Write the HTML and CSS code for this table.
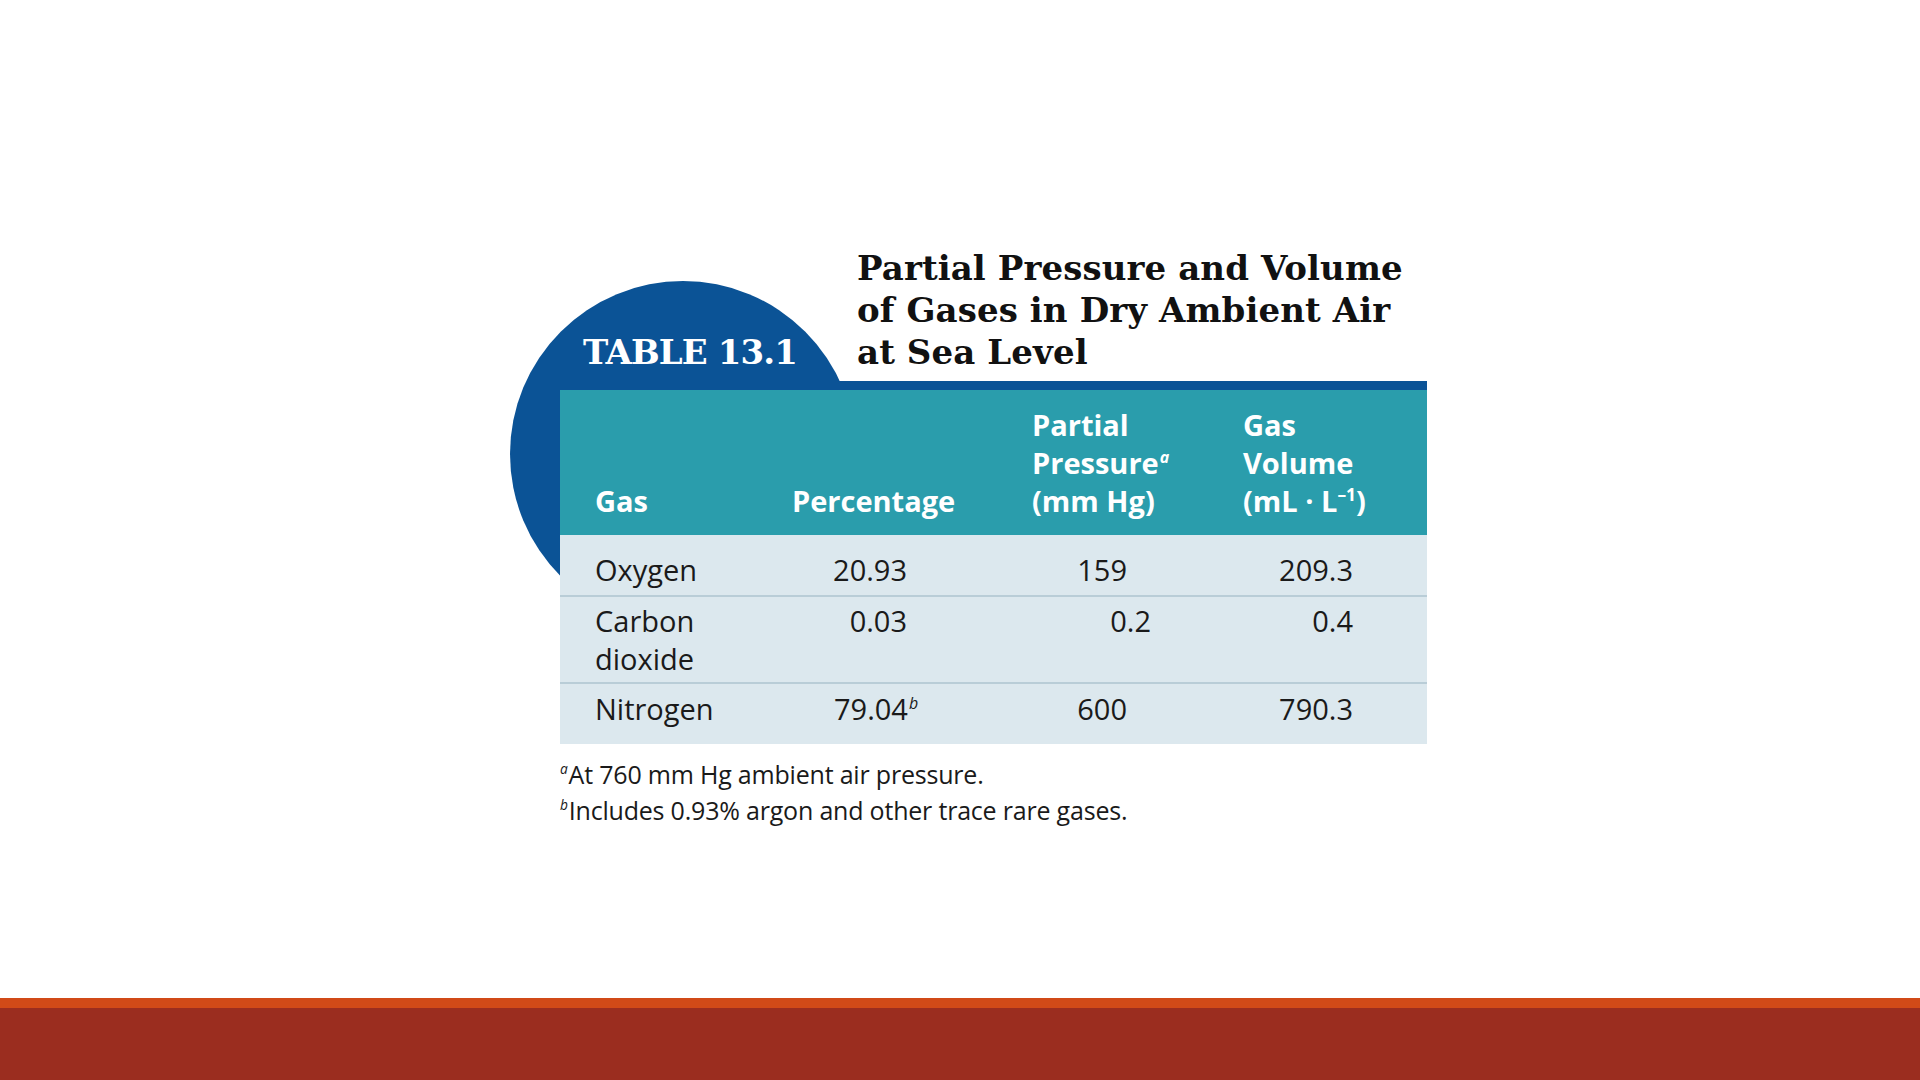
FILE: index.html
```html
<!DOCTYPE html>
<html lang="en">
<head>
<meta charset="utf-8">
<title>Table 13.1</title>
<link rel="stylesheet" href="styles.css">
</head>
<body>
<div class="slide">
  <main class="stage">
    <figure class="figure">
      <div class="disc" aria-hidden="true"></div>
      <div class="heading">
        <div class="label">TABLE 13.1</div>
        <h1 class="title">Partial Pressure and Volume<br>of Gases in Dry Ambient Air<br>at Sea Level</h1>
      </div>
      <table class="data">
        <colgroup>
          <col class="c1"><col class="c2"><col class="c3"><col class="c4">
        </colgroup>
        <thead>
          <tr>
            <th class="first">Gas</th>
            <th>Percentage</th>
            <th>Partial<br>Pressure<sup class="sup">a</sup><br>(mm Hg)</th>
            <th>Gas<br>Volume<br>(mL · L<sup class="exp">–1</sup>)</th>
          </tr>
        </thead>
        <tbody>
          <tr>
            <td class="first">Oxygen</td>
            <td class="n2">20.93</td>
            <td class="n3 int">159</td>
            <td class="n4">209.3</td>
          </tr>
          <tr>
            <td class="first">Carbon<br>dioxide</td>
            <td class="n2">0.03</td>
            <td class="n3">0.2</td>
            <td class="n4">0.4</td>
          </tr>
          <tr>
            <td class="first">Nitrogen</td>
            <td class="n2">79.04<sup class="sup hang">b</sup></td>
            <td class="n3 int">600</td>
            <td class="n4">790.3</td>
          </tr>
        </tbody>
      </table>
      <div class="notes">
        <p><sup class="sup">a</sup>At 760 mm Hg ambient air pressure.</p>
        <p><sup class="sup">b</sup>Includes 0.93% argon and other trace rare gases.</p>
      </div>
    </figure>
  </main>
  <footer class="bars">
    <div class="bar-top"></div>
    <div class="bar-main"></div>
  </footer>
</div>
</body>
</html>
```

FILE: styles.css
```css
html, body {
  margin: 0;
  padding: 0;
  background: #ffffff;
}

.slide {
  width: 1920px;
  height: 1080px;
  display: flex;
  flex-direction: column;
  overflow: hidden;
}

.stage {
  flex: 1;
  padding: 247px 0 0 560px;
  box-sizing: border-box;
}

.figure {
  margin: 0;
  width: 867px;
  position: relative;
}

.disc {
  position: absolute;
  left: -50px;
  top: 34px;
  width: 346px;
  height: 346px;
  border-radius: 50%;
  background: #0b5396;
  z-index: 0;
}

.heading {
  position: relative;
  z-index: 1;
  display: flex;
  align-items: flex-end;
  font-family: "DejaVu Serif", "Liberation Serif", serif;
  font-weight: bold;
  font-size: 34px;
  line-height: 42px;
}

.label {
  width: 297px;
  padding-left: 23px;
  box-sizing: border-box;
  color: #ffffff;
  letter-spacing: -0.9px;
}

.title {
  margin: 0;
  font-size: inherit;
  font-weight: inherit;
  line-height: inherit;
  color: #111111;
  letter-spacing: 0.1px;
}

.data {
  position: relative;
  z-index: 1;
  margin-top: 8px;
  width: 867px;
  border-collapse: collapse;
  table-layout: fixed;
  border-top: 9px solid #0b5396;
  font-family: "Open Sans", "Liberation Sans", sans-serif;
  font-size: 29px;
  line-height: 38px;
}

.c1 { width: 232px; }
.c2 { width: 240px; }
.c3 { width: 211px; }
.c4 { width: 184px; }

.data thead tr {
  background: #2a9dac;
}

.data th {
  color: #ffffff;
  font-weight: bold;
  text-align: left;
  vertical-align: bottom;
  padding: 16px 0 15px 0;
}

.data th.first,
.data td.first {
  padding-left: 35px;
}

.data tbody tr {
  background: #dce8ee;
  border-top: 2px solid #b9cdd7;
}

.data thead + tbody tr:first-child {
  border-top: none;
}

.data td {
  color: #1a1a1a;
  vertical-align: top;
  padding: 5px 0 4px 0;
  text-align: left;
}

.data tbody tr:first-child td {
  padding-top: 16px;
  padding-bottom: 6px;
}

.data tbody tr:last-child td {
  padding-top: 6px;
  padding-bottom: 16px;
}

.data td.n2 { text-align: right; padding-right: 125px; }
.data td.n3 { text-align: right; padding-right: 92px; }
.data td.n3.int { padding-right: 116px; }
.data td.n4 { text-align: right; padding-right: 74px; }

.sup {
  font-style: italic;
  font-size: 0.55em;
  vertical-align: 0.7em;
  line-height: 0;
  padding-left: 1px;
}

.hang {
  margin-right: -0.7em;
}

.exp {
  font-size: 0.6em;
  vertical-align: 0.65em;
  line-height: 0;
}

.notes {
  margin-top: 12px;
  font-family: "Open Sans", "Liberation Sans", sans-serif;
  font-size: 25px;
  line-height: 36px;
  color: #1a1a1a;
  letter-spacing: -0.2px;
}

.notes p {
  margin: 0;
}

.notes .sup {
  padding-left: 0;
  padding-right: 1px;
}

.bars {
  flex: none;
}

.bar-top {
  height: 10px;
  background: #d14a18;
}

.bar-main {
  height: 72px;
  background: #9b2d1f;
}
```
